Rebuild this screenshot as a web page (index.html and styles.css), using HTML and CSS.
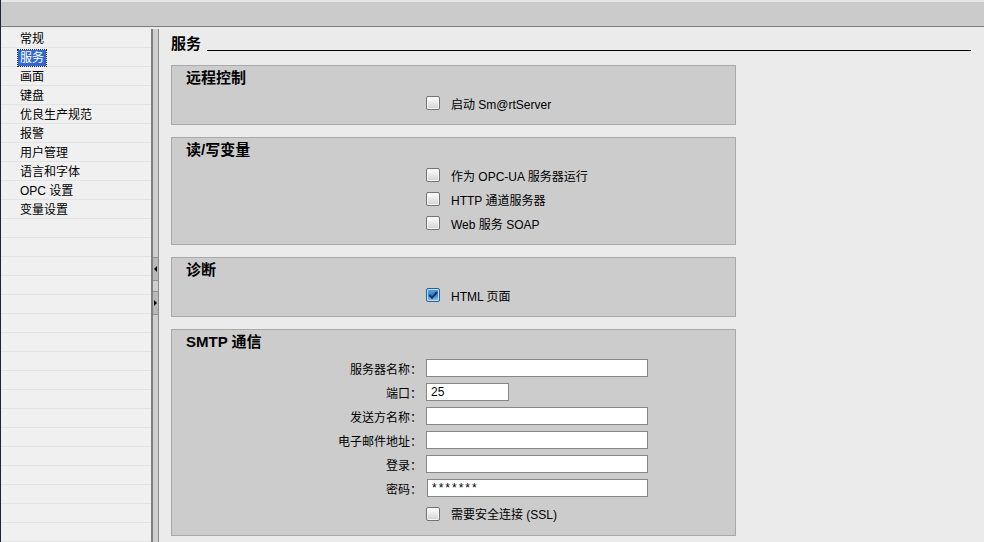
FILE: index.html
```html
<!DOCTYPE html>
<html lang="zh-CN">
<head>
    <meta charset="UTF-8">
    <title>服务</title>
    <link rel="stylesheet" href="styles.css">
</head>
<body>
    <div class="topbar"></div>

    <div class="main">
        <ul class="nav">
            <li class="nav-item">常规</li>
            <li class="nav-item"><span class="selected">服务</span></li>
            <li class="nav-item">画面</li>
            <li class="nav-item">键盘</li>
            <li class="nav-item">优良生产规范</li>
            <li class="nav-item">报警</li>
            <li class="nav-item">用户管理</li>
            <li class="nav-item">语言和字体</li>
            <li class="nav-item">OPC 设置</li>
            <li class="nav-item">变量设置</li>
        </ul>

        <div class="splitter">
            <div class="split-btn left"></div>
            <div class="split-btn right"></div>
        </div>

        <div class="content">
            <div class="heading">
                <span class="heading-text">服务</span>
                <span class="heading-line"></span>
            </div>

            <div class="group">
                <div class="group-title">远程控制</div>
                <div class="rows">
                    <label class="check-row"><span class="box"></span>启动 Sm@rtServer</label>
                </div>
            </div>

            <div class="group">
                <div class="group-title">读/写变量</div>
                <div class="rows">
                    <label class="check-row"><span class="box"></span>作为 OPC-UA 服务器运行</label>
                    <label class="check-row"><span class="box"></span>HTTP 通道服务器</label>
                    <label class="check-row"><span class="box"></span>Web 服务 SOAP</label>
                </div>
            </div>

            <div class="group">
                <div class="group-title">诊断</div>
                <div class="rows">
                    <label class="check-row">
                        <span class="box checked">
                            <svg width="12" height="12" viewBox="0 0 12 12"><path d="M2.5 6 L5 8.8 L10 3" fill="none" stroke="#1b2f55" stroke-width="2"/></svg>
                        </span>HTML 页面
                    </label>
                </div>
            </div>

            <div class="group">
                <div class="group-title">SMTP 通信</div>
                <div class="rows form">
                    <div class="field"><span class="field-label">服务器名称：</span><input class="text-input" type="text" value=""></div>
                    <div class="field"><span class="field-label">端口：</span><input class="text-input short" type="text" value="25"></div>
                    <div class="field"><span class="field-label">发送方名称：</span><input class="text-input" type="text" value=""></div>
                    <div class="field"><span class="field-label">电子邮件地址：</span><input class="text-input" type="text" value=""></div>
                    <div class="field"><span class="field-label">登录：</span><input class="text-input" type="text" value=""></div>
                    <div class="field"><span class="field-label">密码：</span><input class="text-input password" type="text" value="*******"></div>
                    <label class="check-row ssl"><span class="box"></span>需要安全连接 (SSL)</label>
                </div>
            </div>
        </div>
    </div>
</body>
</html>
```

FILE: styles.css
```css
* {
    margin: 0;
    padding: 0;
    box-sizing: border-box;
}
html, body {
    height: 100%;
}
body {
    font-family: "Liberation Sans", "Noto Sans CJK SC", sans-serif;
    font-size: 12px;
    color: #000;
    background-color: #ebebeb;
    border-left: 1px solid #1e2538;
    overflow: hidden;
}
.topbar {
    height: 27px;
    background-color: #cbcbcb;
    border-top: 2px solid #e6e6e6;
    border-bottom: 1px solid #7d7d7d;
}
.main {
    display: flex;
    height: calc(100% - 27px);
    padding-top: 2px;
}

/* left navigation */
.nav {
    width: 150px;
    list-style: none;
    background: repeating-linear-gradient(to bottom, #f0f0f0 0, #f0f0f0 18px, #e3e3e3 18px, #e3e3e3 19px);
}
.nav-item {
    height: 19px;
    line-height: 16px;
    padding: 2px 0 0 19px;
}
.selected {
    display: inline-block;
    line-height: 16px;
    margin-left: -2px;
    padding: 0 2px;
    background-color: #3367cd;
    color: #fff;
    outline: 1px dotted #1a2a55;
}

/* splitter */
.splitter {
    width: 8px;
    background-color: #cfcfcf;
    border-left: 2px solid #7f7f7f;
    border-right: 1px solid #8a8a8a;
    padding-top: 228px;
}
.split-btn {
    position: relative;
    height: 24px;
    background-color: #b9b9b9;
    border-top: 1px solid #8f8f8f;
    border-bottom: 1px solid #8f8f8f;
    margin-bottom: 10px;
}
.split-btn::before {
    content: "";
    position: absolute;
    top: 8px;
    left: 1px;
    border-top: 3px solid transparent;
    border-bottom: 3px solid transparent;
}
.split-btn.left::before {
    border-right: 3px solid #000;
}
.split-btn.right::before {
    border-left: 3px solid #000;
}

/* content */
.content {
    flex: 1;
    padding: 0 13px 0 12px;
}
.heading {
    display: flex;
    height: 20px;
    margin-top: 5px;
    margin-bottom: 11px;
    line-height: 20px;
    font-size: 15px;
    font-weight: bold;
}
.heading-line {
    flex: 1;
    height: 17px;
    margin-left: 6px;
    border-bottom: 1px solid #000;
}
.group {
    width: 565px;
    margin-bottom: 12px;
    padding: 2px 0 9px;
    background-color: #cccccc;
    border: 1px solid #a9a9a9;
}
.group-title {
    height: 20px;
    line-height: 20px;
    padding-left: 14px;
    font-size: 15px;
    font-weight: bold;
}
.rows {
    margin-top: 3px;
}
.rows.form {
    margin-top: 4px;
}
.check-row {
    display: flex;
    align-items: center;
    height: 24px;
    padding-left: 254px;
}
.check-row.ssl {
    margin-top: 1px;
    height: 25px;
}
.box {
    display: flex;
    align-items: center;
    justify-content: center;
    width: 14px;
    height: 14px;
    margin-right: 11px;
    border: 1px solid #737373;
    border-radius: 2px;
    background: linear-gradient(to bottom, #fdfdfd, #e9e9e9 50%, #d2d2d2);
    box-shadow: inset 0 0 0 1px #f4f4f4;
}
.box.checked {
    border-color: #3a5f8e;
    background: linear-gradient(to bottom, #5aa6e6, #2f86d4 50%, #8fcdf2);
    box-shadow: inset 0 0 0 1px #b9dcf5;
}
.field {
    display: flex;
    align-items: center;
    height: 24px;
}
.field-label {
    width: 250px;
    margin-right: 4px;
    text-align: right;
}
.text-input {
    width: 222px;
    height: 18px;
    padding: 0 4px;
    font-family: inherit;
    font-size: 12px;
    background-color: #fff;
    border: 1px solid #878787;
    outline: none;
}
.text-input.short {
    width: 83px;
}
.text-input.password {
    width: 221px;
    margin-left: 1px;
    letter-spacing: 2px;
}
```
